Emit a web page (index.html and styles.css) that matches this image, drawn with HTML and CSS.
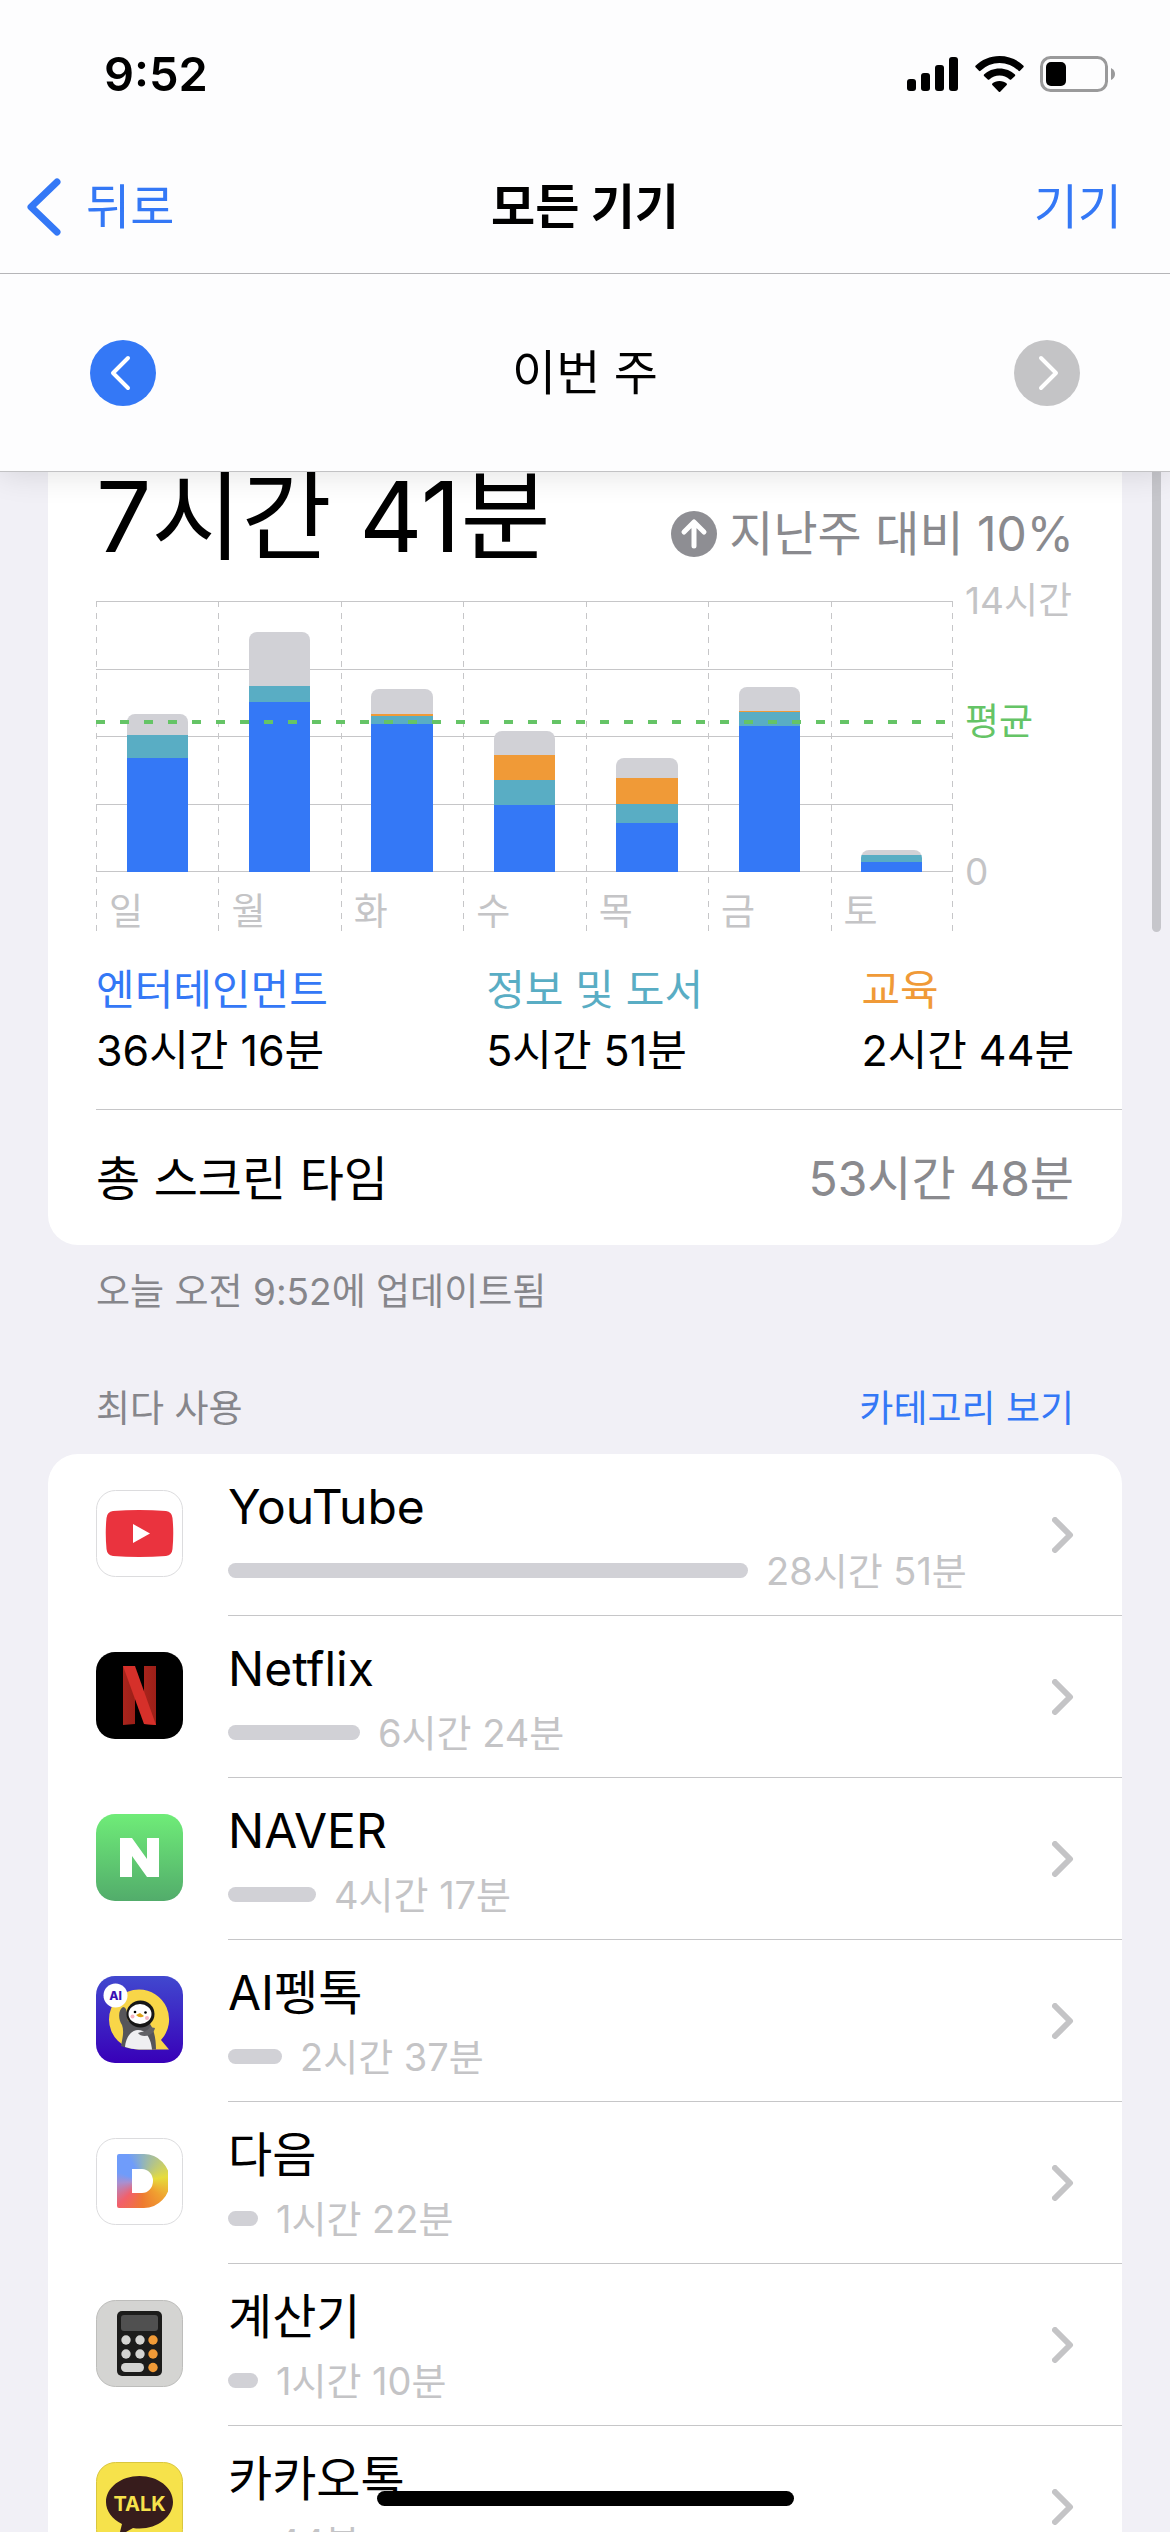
FILE: index.html
```
<!DOCTYPE html>
<html lang="ko">
<head>
    <meta charset="UTF-8">
    <meta name="viewport" content="width=device-width, initial-scale=1.0">
    <title>스크린 타임</title>
    <link rel="stylesheet" href="styles.css">
</head>
<body>
    <header class="top">
        <div class="status-bar">
            <span class="clock">9:52</span>
            <div class="status-icons">
                <svg width="52" height="34" viewBox="0 0 52 34">
                    <rect x="0" y="22" width="9" height="12" rx="3"/>
                    <rect x="14" y="16" width="9" height="18" rx="3"/>
                    <rect x="28" y="8" width="9" height="26" rx="3"/>
                    <rect x="42" y="0" width="9" height="34" rx="3"/>
                </svg>
                <svg width="49" height="37" viewBox="0 0 49 37">
                    <path d="M24.500 0C15 0 6.500 3.800 0.500 9.800Q0 10.500 0.600 11.200L4 14.800Q4.800 15.500 5.500 14.800A27 27 0 0 1 43.500 14.800Q44.200 15.500 45 14.800L48.400 11.200Q49 10.500 48.500 9.800C42.500 3.800 34 0 24.500 0Z"/>
                    <path d="M24.500 12.500C18.500 12.500 13 14.800 9 18.500Q8.400 19.200 9 19.900L12.800 23.500Q13.500 24.200 14.300 23.500A15 15 0 0 1 34.700 23.500Q35.500 24.200 36.200 23.500L40 19.900Q40.600 19.200 40 18.500C36 14.800 30.500 12.500 24.500 12.500Z"/>
                    <path d="M24.500 25C21.500 25 19 26 17.300 27.600Q16.700 28.400 17.300 29L23.800 35.700Q24.500 36.400 25.200 35.700L31.700 29Q32.300 28.400 31.700 27.600C30 26 27.500 25 24.500 25Z"/>
                </svg>
                <svg width="76" height="36" viewBox="0 0 76 36">
                    <rect x="1.500" y="1.500" width="65" height="33" rx="9" fill="none" stroke="#9a9a9b" stroke-width="3"/>
                    <rect x="6" y="6" width="20" height="24" rx="5"/>
                    <path d="M71 12Q75 14 75 18T71 24Z" fill="#9a9a9b"/>
                </svg>
            </div>
        </div>
        <nav class="nav-bar">
            <button class="nav-button back">
                <svg width="36" height="58" viewBox="0 0 36 58">
                    <path d="M31 4L5 29L31 54" fill="none" stroke="currentColor" stroke-width="7" stroke-linecap="round" stroke-linejoin="round"/>
                </svg>
                뒤로
            </button>
            <h1>모든 기기</h1>
            <button class="nav-button devices">기기</button>
        </nav>
        <div class="week-bar">
            <button class="week-button" aria-label="이전 주">
                <svg width="66" height="66" viewBox="0 0 66 66">
                    <path d="M38 18L23 33L38 48" fill="none" stroke="#fff" stroke-width="4" stroke-linecap="round" stroke-linejoin="round"/>
                </svg>
            </button>
            <h2>이번 주</h2>
            <button class="week-button" aria-label="다음 주" disabled>
                <svg width="66" height="66" viewBox="0 0 66 66">
                    <path d="M27 18L42 33L27 48" fill="none" stroke="#fff" stroke-width="4" stroke-linecap="round" stroke-linejoin="round"/>
                </svg>
            </button>
        </div>
    </header>

    <main class="content">
        <section class="card summary">
            <div class="average">
                <strong>7시간 41분</strong>
                <span class="compare">
                    <svg width="46" height="46" viewBox="0 0 46 46">
                        <circle cx="23" cy="23" r="23" fill="#8e8e93"/>
                        <path d="M23 35V12M13 21L23 11L33 21" fill="none" stroke="#fff" stroke-width="5" stroke-linecap="round" stroke-linejoin="round"/>
                    </svg>
                    지난주 대비 10%
                </span>
            </div>

            <div class="chart">
                <div class="plot">
                    <div class="grid-lines"><i></i><i></i><i></i><i></i></div>
                    <div class="day">
                        <div class="bar" style="height: 58.200%"><i class="other" style="flex-grow: 21"></i><i class="info" style="flex-grow: 23"></i><i class="fun" style="flex-grow: 113"></i></div>
                        <span>일</span>
                    </div>
                    <div class="day">
                        <div class="bar" style="height: 88.500%"><i class="other" style="flex-grow: 54"></i><i class="info" style="flex-grow: 16"></i><i class="fun" style="flex-grow: 169"></i></div>
                        <span>월</span>
                    </div>
                    <div class="day">
                        <div class="bar" style="height: 67.400%"><i class="other" style="flex-grow: 25"></i><i class="study" style="flex-grow: 2"></i><i class="info" style="flex-grow: 8"></i><i class="fun" style="flex-grow: 147"></i></div>
                        <span>화</span>
                    </div>
                    <div class="day">
                        <div class="bar" style="height: 52.200%"><i class="other" style="flex-grow: 24"></i><i class="study" style="flex-grow: 25"></i><i class="info" style="flex-grow: 25"></i><i class="fun" style="flex-grow: 67"></i></div>
                        <span>수</span>
                    </div>
                    <div class="day">
                        <div class="bar" style="height: 41.900%"><i class="other" style="flex-grow: 19"></i><i class="study" style="flex-grow: 26"></i><i class="info" style="flex-grow: 19"></i><i class="fun" style="flex-grow: 49"></i></div>
                        <span>목</span>
                    </div>
                    <div class="day">
                        <div class="bar" style="height: 68.100%"><i class="other" style="flex-grow: 23"></i><i class="study" style="flex-grow: 1"></i><i class="info" style="flex-grow: 14"></i><i class="fun" style="flex-grow: 146"></i></div>
                        <span>금</span>
                    </div>
                    <div class="day">
                        <div class="bar" style="height: 8.200%"><i class="other" style="flex-grow: 5"></i><i class="info" style="flex-grow: 7"></i><i class="fun" style="flex-grow: 10"></i></div>
                        <span>토</span>
                    </div>
                    <div class="average-line"></div>
                </div>
                <div class="scale">
                    <span>14시간</span>
                    <span class="average-label">평균</span>
                    <span>0</span>
                </div>
            </div>

            <dl class="categories">
                <div>
                    <dt class="fun-text">엔터테인먼트</dt>
                    <dd>36시간 16분</dd>
                </div>
                <div>
                    <dt class="info-text">정보 및 도서</dt>
                    <dd>5시간 51분</dd>
                </div>
                <div>
                    <dt class="study-text">교육</dt>
                    <dd>2시간 44분</dd>
                </div>
            </dl>

            <div class="total">
                <span>총 스크린 타임</span>
                <span class="total-time">53시간 48분</span>
            </div>
        </section>
        <p class="updated">오늘 오전 9:52에 업데이트됨</p>

        <div class="section-header">
            <h3>최다 사용</h3>
            <a href="#categories">카테고리 보기</a>
        </div>

        <ul class="card apps" id="categories">
            <li class="app">
                <svg class="icon" viewBox="0 0 87 87">
                    <rect x="0.500" y="0.500" width="86" height="86" rx="19" fill="#fff" stroke="#dcdcde"/>
                    <path d="M17 21Q43 19 70 21Q76 22 76.500 28Q78 43 76.500 59Q76 65 70 66Q43 68 17 66Q11 65 10.500 59Q9 43 10.500 28Q11 22 17 21Z" fill="#ea333e"/>
                    <path d="M37 34L54 43.500L37 53Z" fill="#fff"/>
                </svg>
                <div class="app-row">
                    <div class="app-info">
                        <span class="app-name">YouTube</span>
                        <div class="usage"><i style="width: 520px"></i>28시간 51분</div>
                    </div>
                    <svg class="chevron" viewBox="0 0 22 36"><path d="M3 3L18 18L3 33"/></svg>
                </div>
            </li>
            <li class="app">
                <svg class="icon" viewBox="0 0 87 87">
                    <defs>
                        <linearGradient id="fold" x1="0" y1="0" x2="1" y2="0">
                            <stop offset="0" stop-color="#a8241c"/>
                            <stop offset="1" stop-color="#9c1f18"/>
                        </linearGradient>
                    </defs>
                    <rect width="87" height="87" rx="19"/>
                    <path d="M27 14H39V72L27 73Z" fill="url(#fold)"/>
                    <path d="M48 14H60V73L48 72Z" fill="url(#fold)"/>
                    <path d="M27 14H39L60 73L48 72Z" fill="#d6302a"/>
                </svg>
                <div class="app-row">
                    <div class="app-info">
                        <span class="app-name">Netflix</span>
                        <div class="usage"><i style="width: 132px"></i>6시간 24분</div>
                    </div>
                    <svg class="chevron" viewBox="0 0 22 36"><path d="M3 3L18 18L3 33"/></svg>
                </div>
            </li>
            <li class="app">
                <svg class="icon" viewBox="0 0 87 87">
                    <defs>
                        <linearGradient id="green" x1="0" y1="0" x2="0" y2="1">
                            <stop offset="0" stop-color="#6fec78"/>
                            <stop offset="1" stop-color="#52ac6b"/>
                        </linearGradient>
                    </defs>
                    <rect width="87" height="87" rx="19" fill="url(#green)"/>
                    <path d="M24 24H36L51 45V24H63V63H51L36 42V63H24Z" fill="#fff"/>
                </svg>
                <div class="app-row">
                    <div class="app-info">
                        <span class="app-name">NAVER</span>
                        <div class="usage"><i style="width: 88px"></i>4시간 17분</div>
                    </div>
                    <svg class="chevron" viewBox="0 0 22 36"><path d="M3 3L18 18L3 33"/></svg>
                </div>
            </li>
            <li class="app">
                <svg class="icon" viewBox="0 0 87 87">
                    <defs>
                        <linearGradient id="blue" x1="0" y1="0" x2="0" y2="1">
                            <stop offset="0" stop-color="#4148cf"/>
                            <stop offset="1" stop-color="#3800b8"/>
                        </linearGradient>
                    </defs>
                    <rect width="87" height="87" rx="19" fill="url(#blue)"/>
                    <path d="M43 13.500A30 30 0 0 1 65 64L73 73.500H43A30 30 0 0 1 43 13.500Z" fill="#f8d648"/>
                    <path d="M25 70C27 60 28 55 26 49C22 43 22 34 27 31C32 31 31 41 32 45L54 48C59 55 60 66 60 73.500H43Q32 73 25 70Z" fill="#56565a"/>
                    <path d="M29 71C30 60 36 54 42 54C51 54 55 64 56 73.500H43Q35 73 29 71Z" fill="#efeff1"/>
                    <path d="M59 52C57 61 45 62 42 57C46 55 50 57 54 51Z" fill="#626266"/>
                    <ellipse cx="44.500" cy="38" rx="14" ry="13.500" fill="#171717"/>
                    <ellipse cx="44" cy="38" rx="11.500" ry="10" fill="#fff"/>
                    <circle cx="39" cy="36" r="1.300"/>
                    <circle cx="49.500" cy="36.500" r="1.300"/>
                    <path d="M40 39L44 37L48 40Q44 43 40 39Z" fill="#dda315"/>
                    <circle cx="36.500" cy="40.500" r="2" fill="#f6b4c2"/>
                    <circle cx="51" cy="42" r="2" fill="#f6b4c2"/>
                    <circle cx="19.500" cy="19.500" r="12" fill="#fff"/>
                    <text x="19.500" y="24" class="ai-mark">AI</text>
                </svg>
                <div class="app-row">
                    <div class="app-info">
                        <span class="app-name">AI펭톡</span>
                        <div class="usage"><i style="width: 54px"></i>2시간 37분</div>
                    </div>
                    <svg class="chevron" viewBox="0 0 22 36"><path d="M3 3L18 18L3 33"/></svg>
                </div>
            </li>
            <li class="app">
                <svg class="icon" viewBox="0 0 87 87">
                    <rect x="0.500" y="0.500" width="86" height="86" rx="19" fill="#fff" stroke="#dcdcde"/>
                    <foreignObject x="21" y="16" width="51" height="54"><div class="daum-mark"></div></foreignObject>
                </svg>
                <div class="app-row">
                    <div class="app-info">
                        <span class="app-name">다음</span>
                        <div class="usage"><i style="width: 30px"></i>1시간 22분</div>
                    </div>
                    <svg class="chevron" viewBox="0 0 22 36"><path d="M3 3L18 18L3 33"/></svg>
                </div>
            </li>
            <li class="app">
                <svg class="icon" viewBox="0 0 87 87">
                    <rect x="0.500" y="0.500" width="86" height="86" rx="19" fill="#d4d4d2" stroke="#bdbdbb"/>
                    <rect x="21" y="11" width="45" height="65" rx="5" fill="#1c1c1b"/>
                    <rect x="25" y="15" width="37" height="16" rx="3" fill="#505050"/>
                    <g fill="#d4d4d2">
                        <circle cx="30" cy="40" r="4.700"/>
                        <circle cx="44" cy="40" r="4.700"/>
                        <circle cx="30" cy="54" r="4.700"/>
                        <circle cx="44" cy="54" r="4.700"/>
                        <rect x="25" y="63" width="23" height="9" rx="4.500"/>
                    </g>
                    <g fill="#f09a37">
                        <circle cx="57" cy="40" r="4.700"/>
                        <circle cx="57" cy="54" r="4.700"/>
                        <circle cx="57" cy="67.500" r="4.700"/>
                    </g>
                </svg>
                <div class="app-row">
                    <div class="app-info">
                        <span class="app-name">계산기</span>
                        <div class="usage"><i style="width: 30px"></i>1시간 10분</div>
                    </div>
                    <svg class="chevron" viewBox="0 0 22 36"><path d="M3 3L18 18L3 33"/></svg>
                </div>
            </li>
            <li class="app">
                <svg class="icon" viewBox="0 0 87 87">
                    <rect x="0.500" y="0.500" width="86" height="86" rx="19" fill="#f6e24b" stroke="#d9c63e"/>
                    <path d="M43.500 14C25 14 10 25.500 10 40C10 49 16 57 26 62L23 74L37 66Q40 66.500 43.500 66.500C62 66.500 77 54.500 77 40S62 14 43.500 14Z" fill="#371c1c"/>
                    <text x="43.500" y="49" class="talk-mark">TALK</text>
                </svg>
                <div class="app-row">
                    <div class="app-info">
                        <span class="app-name">카카오톡</span>
                        <div class="usage"><i style="width: 30px"></i>44분</div>
                    </div>
                    <svg class="chevron" viewBox="0 0 22 36"><path d="M3 3L18 18L3 33"/></svg>
                </div>
            </li>
        </ul>
    </main>

    <div class="scrollbar"></div>
    <div class="home-indicator"></div>
</body>
</html>
```
FILE: styles.css
```
* {
    box-sizing: border-box;
    margin: 0;
    padding: 0;
}

body {
    height: 100vh;
    overflow: hidden;
    display: flex;
    flex-direction: column;
    background: #f1f0f6;
    color: #000;
    font-family: Inter, "Noto Sans CJK KR", sans-serif;
    font-size: 48px;
    line-height: 60px;
}

button {
    border: none;
    background: none;
    font: inherit;
    color: inherit;
    cursor: pointer;
}

svg {
    display: block;
    flex-shrink: 0;
}

/* Header */
.top {
    position: relative;
    z-index: 1;
    flex-shrink: 0;
    background: #fdfdfe;
    border-bottom: 1px solid #c2c2c4;
    box-shadow: 0 2px 30px rgba(0, 0, 0, 0.12);
}

.status-bar {
    display: flex;
    justify-content: space-between;
    align-items: center;
    height: 148px;
    padding: 0 54px 0 104px;
}

.clock {
    font-size: 47px;
    font-weight: 600;
}

.status-icons {
    display: flex;
    align-items: center;
    gap: 16px;
}

.nav-bar {
    display: grid;
    grid-template-columns: 1fr auto 1fr;
    align-items: center;
    height: 126px;
    padding: 0 48px 8px;
    border-bottom: 1px solid #b5b5b8;
}

h1 {
    font-size: 48px;
    font-weight: 700;
}

.nav-button {
    color: #3478f6;
}

.back {
    display: flex;
    align-items: center;
    gap: 24px;
    margin-left: -22px;
}

.devices {
    justify-self: end;
}

.week-bar {
    display: flex;
    justify-content: space-between;
    align-items: center;
    height: 197px;
    padding: 0 90px;
}

h2 {
    font-size: 48px;
    font-weight: 400;
}

.week-button {
    width: 66px;
    height: 66px;
    border-radius: 50%;
    background: #3478f6;
}

.week-button:disabled {
    background: #c4c4c6;
}

/* Scrolled content */
.content {
    flex: 1;
    min-height: 0;
    overflow: hidden;
    padding: 0 48px;
}

.card {
    background: #fff;
    border-radius: 30px;
}

.summary {
    margin-top: -40px;
    padding: 20px 0 0 48px;
}

.average {
    display: flex;
    justify-content: space-between;
    align-items: flex-end;
    padding-right: 48px;
}

.average strong {
    font-size: 98px;
    font-weight: 400;
    line-height: 130px;
}

.compare {
    display: flex;
    align-items: center;
    gap: 12px;
    margin-bottom: 18px;
    color: #8a8a8e;
}

/* Chart */
.chart {
    display: flex;
    margin-top: 19px;
    padding-right: 48px;
    color: #c4c4c6;
    font-size: 37px;
    line-height: 44px;
}

.plot {
    position: relative;
    flex: 1;
    display: flex;
    height: 331px;
    padding-bottom: 60px;
}

.grid-lines {
    position: absolute;
    inset: 0 0 60px 0;
    display: flex;
    flex-direction: column;
    border-bottom: 1px solid #c6c6c8;
}

.grid-lines i {
    flex: 1;
    border-top: 1px solid #c6c6c8;
}

.day {
    position: relative;
    flex: 1;
    display: flex;
    align-items: flex-end;
    justify-content: center;
}

.day::before,
.plot::after {
    content: "";
    position: absolute;
    left: 0;
    top: 0;
    bottom: -60px;
    width: 1px;
    background: repeating-linear-gradient(#c6c6c8 0 6px, transparent 6px 12px);
}

.plot::after {
    left: auto;
    right: 0;
    bottom: 0;
}

.day span {
    position: absolute;
    left: 13px;
    top: 100%;
    margin-top: 18px;
}

.bar {
    display: flex;
    flex-direction: column;
    width: 50%;
    border-radius: 8px 8px 0 0;
    overflow: hidden;
}

.bar i {
    flex-basis: 0;
}

.other {
    background: #d1d1d6;
}

.study {
    background: #f09a37;
}

.info {
    background: #59adc4;
}

.fun {
    background: #3478f6;
}

.average-line {
    position: absolute;
    left: 0;
    right: 0;
    top: 119px;
    height: 4px;
    background: repeating-linear-gradient(to right, #65c466 0 9px, transparent 9px 24px);
}

.scale {
    position: relative;
    display: flex;
    flex-direction: column;
    justify-content: space-between;
    width: 121px;
    height: 315px;
    margin-top: -22px;
    padding-left: 12px;
    white-space: nowrap;
}

.average-label {
    position: absolute;
    top: 121px;
    color: #65c466;
}

.categories {
    display: flex;
    justify-content: space-between;
    margin-top: 27px;
    padding: 0 48px 28px 0;
    font-size: 42px;
    line-height: 61px;
}

.categories dd {
    font-size: 43px;
}

.fun-text {
    color: #3478f6;
}

.info-text {
    color: #59adc4;
}

.study-text {
    color: #f09a37;
}

.total {
    display: flex;
    justify-content: space-between;
    align-items: center;
    height: 136px;
    padding: 2px 48px 0 0;
    border-top: 1px solid #c6c6c8;
}

.total-time {
    color: #8a8a8e;
}

.updated,
.section-header {
    padding: 0 48px;
    color: #86868b;
    font-size: 37px;
    line-height: 48px;
}

.updated {
    margin-top: 23px;
}

.section-header {
    display: flex;
    justify-content: space-between;
    margin: 69px 0 21px;
}

h3 {
    font-size: 37px;
    font-weight: 400;
}

.section-header a {
    color: #3478f6;
    text-decoration: none;
}

/* App list */
.apps {
    list-style: none;
    padding-left: 48px;
}

.app {
    display: flex;
    gap: 45px;
}

.icon {
    width: 87px;
    height: 87px;
    margin-top: 36px;
}

.app-row {
    flex: 1;
    display: flex;
    justify-content: space-between;
    align-items: center;
    height: 162px;
    padding-right: 48px;
    border-bottom: 1px solid #c6c6c8;
}

.app-info {
    display: flex;
    flex-direction: column;
    gap: 10px;
    padding-top: 2px;
}

.usage {
    display: flex;
    align-items: center;
    gap: 18px;
    color: #c4c4c6;
    font-size: 38px;
    line-height: 48px;
}

.usage i {
    height: 15px;
    border-radius: 8px;
    background: #d1d1d6;
}

.chevron {
    width: 22px;
    height: 36px;
    fill: none;
    stroke: #c4c4c6;
    stroke-width: 6px;
    stroke-linecap: round;
    stroke-linejoin: round;
}

.ai-mark {
    fill: #3a10b4;
    font-size: 12px;
    font-weight: 800;
    text-anchor: middle;
}

.talk-mark {
    fill: #f6e24b;
    font-size: 20px;
    font-weight: 700;
    text-anchor: middle;
}

.daum-mark {
    width: 51px;
    height: 54px;
    background: conic-gradient(from 0deg at 50% 50%, #8fb3c0, #e6dc3c 80deg, #f0a030 130deg, #ee7a30 180deg, #f2606a 225deg, #a98fd0 265deg, #6f9cfa 290deg, #6f9cfa 330deg, #8fb3c0);
    clip-path: path(evenodd, "M2 0H27A26 27 0 0 1 27 54H2Q0 54 0 52V2Q0 0 2 0ZM15 15V39H25A11 12 0 0 0 25 15Z");
}

/* Overlays */
.scrollbar {
    position: fixed;
    top: 472px;
    right: 9px;
    width: 9px;
    height: 460px;
    border-radius: 0 0 5px 5px;
    background: #c6c6cb;
}

.home-indicator {
    position: fixed;
    left: 50%;
    bottom: 26px;
    z-index: 2;
    width: 417px;
    height: 15px;
    margin-left: -208px;
    border-radius: 8px;
    background: #000;
}
```
